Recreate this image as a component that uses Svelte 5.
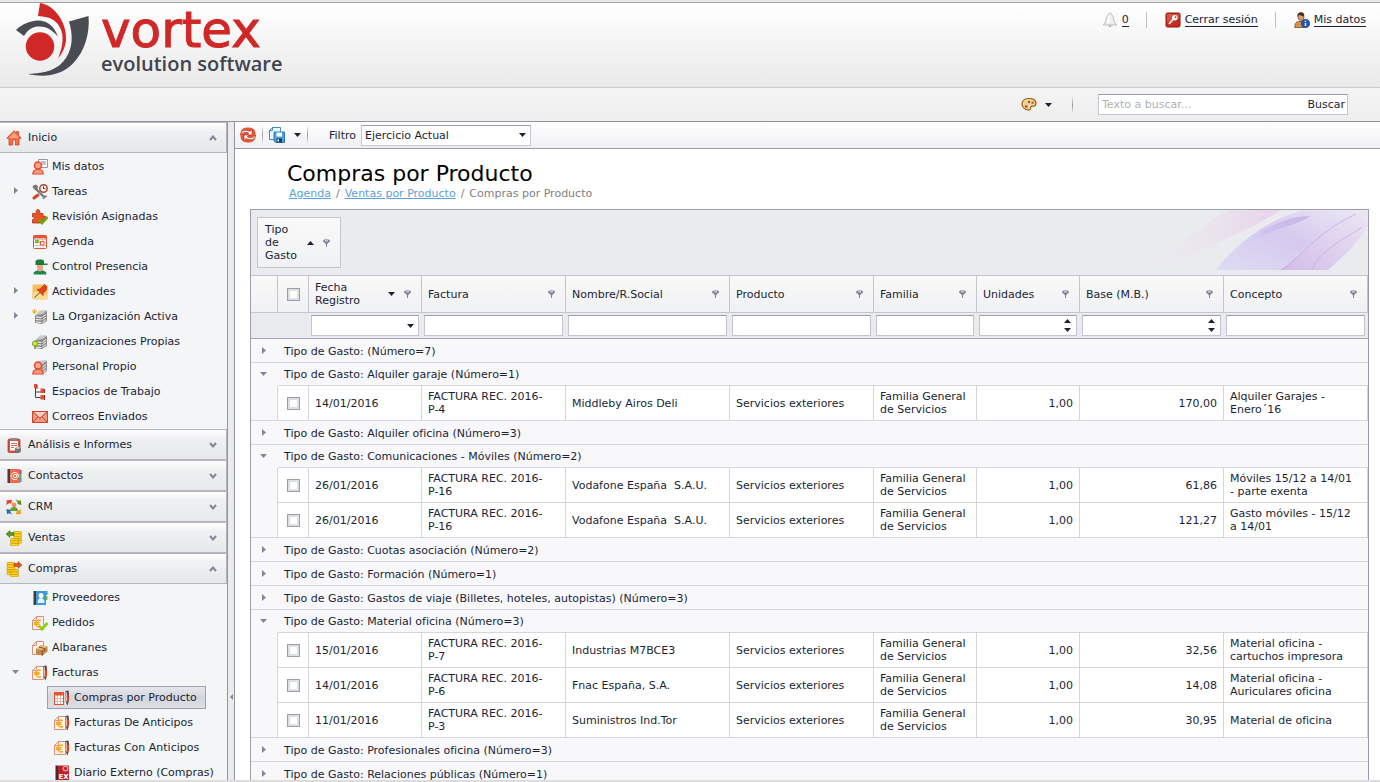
<script lang="ts">
  type Entry = { label: string; icon: string; arrow?: 'right' | 'down'; selected?: boolean; children?: Entry[] };
  type Section = { label: string; icon: string; open: boolean; items: Entry[] };

  const building =
    '<path d="M3 7l5-4 7-1v10l-5 3-7-1z" fill="#8d8d8d"/><path d="M3 6l5-4.500 7-.5-4 4z" fill="#c9c9c9"/><path d="M4 8l6 .5 4-3M4 10.500l6 .5 4-3M4 13l6 .7 4-3" stroke="#f6f6f6" fill="none"/><path d="M10 6.500V15" stroke="#707070" stroke-width=".7"/>';
  const person =
    '<circle cx="6" cy="6.500" r="3.500" fill="#f9a48f" stroke="#e8482c" stroke-width="1.500"/><path d="M.8 15c0-3 2-4.500 5.200-4.500s5.200 1.500 5.200 4.500z" fill="#f99a82" stroke="#e8482c" stroke-width="1.200"/>';
  const sheet =
    '<path d="M4.500 1.500h7v13h-11v-9z" fill="#fff6ef" stroke="#dc8f76"/><path d="M4.500 1.500v4h-4" fill="none" stroke="#dc8f76"/>';
  const euro = '<path d="M9 5.500C6 4 4 6 4 8.500s2 4.500 5 3M2 7.700h5.500M2 9.400h5.500" fill="none" stroke="#fba61a" stroke-width="1.400"/>';
  const pen =
    '<path d="M11.500 4h3.500v7.500h-3.500z" fill="#e2401d"/><path d="M11.500 1l3-.5.5 4h-3.500z" fill="#4a4346"/><path d="M12.300 2v9" stroke="#fff" stroke-width=".8"/><path d="M11.800 11.500h3l-1.500 4.200z" fill="#5c4a48"/>';
  const coins = (x: number, y: number, n: number) =>
    Array.from(
      { length: n },
      (_, i) => `<rect x="${x}" y="${y + i * 2.4}" width="8" height="2.6" rx="1.2" fill="#ffd51e" stroke="#b98a00" stroke-width=".6"/>`
    ).join('');
  const book = '<path d="M1.500 1h2.500v14H1.500z" fill="#3d3d42"/>';

  const icons: Record<string, string> = {
    home: '<path d="M8 .8L.8 8.200H3V15h3.700v-5h2.800v5H13V8.200h2.200L12.600 5.600V1.500h-2v2z" fill="#f4704b" stroke="#c9401f" stroke-width=".8"/><path d="M8 2.500L3 8h10z" fill="#fca283"/>',
    card: '<path d="M6.500 .5h9v8h-9z" fill="#fff" stroke="#999"/><path d="M9 3h5M10 5h4" stroke="#888"/>' + person,
    tools:
      '<path d="M2 3l11 11" stroke="#6b6b6b" stroke-width="2"/><path d="M.500 2l1.500 3.500 3.500 0L6 2.500 4 .500z" fill="#777"/><path d="M2 14l4-3" stroke="#d8401d" stroke-width="3" stroke-linecap="round"/><path d="M6 11l3-3" stroke="#999" stroke-width="1.500"/><circle cx="11.500" cy="4.500" r="3.700" fill="#fff" stroke="#b5422a" stroke-width="1.500"/><path d="M11.500 2.300v2.400h2" stroke="#333" fill="none"/><path d="M11 15l1-3 3 .5" stroke="#888" fill="none" stroke-width="1.500"/>',
    puzzle:
      '<path d="M.500 4.500h4c-1-2 0-4 1.500-4s2.500 2 1.500 4H11v3c2-1 3 0 3 1.500S13 11 11 10v4H.500v-3.500c2 1 2.500-3.500 0-2.500z" fill="#e65427" stroke="#b43310" stroke-width=".8"/><path d="M7 10.500l3 3.500L15.500 8" fill="none" stroke="#6aa812" stroke-width="2.600"/>',
    calendar:
      '<rect x="1.500" y="1.500" width="13" height="13" rx="1" fill="#fff" stroke="#d9532f"/><path d="M2 5.500h12M2 8.500h12M2 11.500h12M5 5v9M8 5v9M11 5v9" stroke="#d0c8c4"/><path d="M1.500 1.500h13v3h-13z" fill="#e8552e"/><path d="M3 6h4v3H3z" fill="#7dba2e"/><path d="M8.500 7.500h3.500v3.500H8.500z" fill="#fff" stroke="#ea4c28"/>',
    guard:
      '<path d="M3.500 5V2.500C3.500 1 5 .5 8 .5s4 .5 4 2V4.500h3.500V6H3.500z" fill="#1c7a3a"/><path d="M5 6h6v3c0 2-1 3.500-3 3.500S5 11 5 9z" fill="#f3a184"/><path d="M1.500 15.500c0-3 2-4 4.500-4l2 1 2-1c2.500 0 4.500 1 4.500 4z" fill="#22864a"/>',
    pin: '<rect x=".5" y=".5" width="15" height="15" rx="1.500" fill="#fbc05c"/><path d="M.5 9l7-3 8 5v3.500l-1.500 1H2l-1.500-1z" fill="#fbd98e"/><path d="M2.500 13.500L8 8.500" stroke="#555"/><path d="M5 5.500l6 6 .5-3L14 6.500 15 3 12.500.5 10 3 8 5z" fill="#e4441b" stroke="#a82c0c" stroke-width=".6"/>',
    orgStar: building + '<path d="M2.500 0v5M0 2h5M1 4l1.500-2L4 4" stroke="#f7a823" fill="none"/>',
    orgPin: building + '<path d="M3 10v5" stroke="#c9762c" stroke-width="1.500"/><circle cx="3" cy="9.500" r="2.600" fill="#c6ea3c" stroke="#6f9c10"/>',
    orgPerson: building + person,
    tree: '<path d="M3.500 3v10.500H10M3.500 8H10" fill="none" stroke="#444"/><path d="M2 0h3v4H2zM8.500 4.500H12V9H8.500zM8.500 11H12v4.500H8.500z" fill="#e84f30"/><path d="M5 1v4M12.500 5v4M12.500 11v5" stroke="#962712"/>',
    mail: '<path d="M.5 2.500h15v11H.5z" fill="#f49a84" stroke="#cf4328"/><path d="M2 3h12L8 8.500z" fill="#fcd0c3"/><path d="M.5 2.500L8 9.500l7.500-7M.5 13.500L6 8M15.500 13.500L10 8" fill="none" stroke="#c0412a"/>',
    clipboard:
      '<rect x="2" y="2" width="12" height="13.500" rx="1.500" fill="#d9503a" stroke="#9c3222" stroke-width=".7"/><path d="M4 4h8v9.500H4z" fill="#fff"/><path d="M5 1h6v2.500H5z" fill="#8d8d8d"/><path d="M5 6.500h6M5 8.500h6M5 10.500h3" stroke="#db6b58"/><path d="M9 11l3-1.500 3 1.500v3.500l-3 1.500-3-1.500z" fill="#777"/><path d="M9 11l3-1.500 3 1.500-3 1z" fill="#c9c9c9"/>',
    contacts:
      '<path d="M14 2h1.500v4H14z" fill="#9b45b5"/><path d="M14 6h1.500v4H14z" fill="#7db528"/><path d="M14 10h1.500v4H14z" fill="#2d9be0"/><path d="M4 1h10v14H4z" fill="#f2684a"/>' +
      book +
      '<circle cx="9" cy="8" r="1.700" fill="none" stroke="#fff"/><path d="M10.700 6.500v2.700c1.500.8 2-1 1.700-2A3.700 3.700 0 1 0 11 11" fill="none" stroke="#fff"/>',
    crm: '<circle cx="8" cy="6" r="2.400" fill="#ed9655"/><path d="M4 12c0-3 2-4 4-4s4 1 4 4z" fill="#63a02c"/><path d="M0 6l1-3L0 1.500 6 .8 5 5 3.800 4z" fill="#e0412a"/><path d="M9.500 .5l3.500 1.500 1.500-1.200L15.500 6 11 5l1-1z" fill="#5e8c20"/><path d="M15.500 10l-1 3 1 2-5.500 .3 1-4.300 1.300 1z" fill="#f29a1e"/><path d="M6 15.500l-3-1.200-2 1L.500 10l4.500 1-1 1z" fill="#2c6fb5"/>',
    sales: coins(7.5, 1.5, 5) + coins(4.5, 8.5, 3) + '<path d="M0 4L4 .500v2h4v3H4v2z" fill="#5a9b20" stroke="#3b7010" stroke-width=".5"/>',
    buys: coins(1, 1.5, 5) + coins(4.5, 8.5, 3) + '<path d="M16 4L12 .5v2H8v3h4v2z" fill="#dc571b" stroke="#a53908" stroke-width=".5"/>',
    suppliers:
      '<path d="M14 1h1.500v4H14z" fill="#2c9be8"/><path d="M14 6h1.500v4H14z" fill="#6fc02c"/><path d="M4 1h10v14H4z" fill="#3f97dc"/>' +
      book +
      '<circle cx="9" cy="5.500" r="2.500" fill="#fff"/><path d="M5.500 13c0-3.500 1.500-5 3.500-5s3.500 1.500 3.500 5z" fill="#e6f3fd"/>',
    order: sheet + euro + '<path d="M7 10.500l3 3.500L15.500 8" fill="none" stroke="#8fce13" stroke-width="2.600"/>',
    delivery:
      sheet +
      '<path d="M4 9l5-4 6.500 1.500v5L10 15.500 4 14z" fill="#c68743"/><path d="M4 9l5-4 6.500 1.500L10.500 10z" fill="#e9bd83"/><path d="M10.300 10v5.500M7 7l5.500 1.600v2.500" stroke="#7e4c1c" fill="none"/>',
    invoice: sheet + euro + pen,
    product:
      '<rect x=".5" y="2.500" width="9" height="12" fill="#fff" stroke="#e2512c"/><path d="M1 8.500h8M1 11.500h8M3.500 5v9M6.500 5v9" stroke="#e9b4a4"/><path d="M0 2h10v3.500H0z" fill="#e8552e"/>' + pen,
    diary:
      '<path d="M4 .5h11v15H4z" fill="#c0202a"/><path d="M1.500 .5H4v15H1.500z" fill="#333"/><circle cx="11.500" cy="3.500" r="2.300" fill="none" stroke="#f1a5a5" stroke-width="1.300"/><text x="4.500" y="13.500" font-family="DejaVu Sans" font-size="7" font-weight="bold" fill="#fff">EX</text>',
    bell: '<path d="M8 1c1 0 1.500.5 1.500 1.500C12 4 11.500 8 12.500 10l2 3h-13l2-3c1-2 .5-6 3-7.500C6.500 1.500 7 1 8 1z" fill="#eee" stroke="#bdbdbd"/><path d="M6 13.500h4l-2 2z" fill="#aaa"/><path d="M7 4L6 11" stroke="#fff" stroke-width="1.500"/>',
    key: '<rect x="1" y="1" width="14" height="14" rx="1.500" fill="#c52f20" stroke="#8d180f"/><path d="M2 2h12v5L2 10z" fill="#d8533f"/><circle cx="9.800" cy="5.800" r="2.700" fill="#fff"/><circle cx="10.500" cy="5.200" r=".9" fill="#c52f20"/><path d="M8 7.500L4 12" stroke="#fff" stroke-width="1.700"/>',
    user: '<path d="M.8 15.500c0-5 1.500-6 5.200-6s5 1 5 6z" fill="#d7904c" stroke="#6f4014" stroke-width=".7"/><ellipse cx="7" cy="4.800" rx="3" ry="3.800" fill="#dda069" stroke="#54310f" stroke-width=".6"/><path d="M3.500 5C3 1.500 5 .3 7 .3S10.800 1.500 10 4.500C8 4 6 2.500 5 3z" fill="#493019"/><circle cx="11.500" cy="11.500" r="4.200" fill="#2152b5" stroke="#163678" stroke-width=".6"/><path d="M11.500 11v3M11.500 8.700v1.300" stroke="#fff" stroke-width="1.400"/>',
    palette:
      '<path d="M8 1.500c4 0 7 1.700 7 4.800 0 2.400-1.500 3.200-3.500 2.900-1.700-.2-2 .7-1.800 1.600.3 1.700-1 2.400-2.700 2.200C3.500 12.500 1 10 1 7c0-3.500 3-5.500 7-5.500z" fill="#f7cf86" stroke="#8b5510" stroke-width="1.100"/><path d="M7 4h2v2H7z" fill="#3a62c4"/><path d="M4 8.500h2.500v2H4z" fill="#c92c1d"/><path d="M10.500 4.500h2.300v2.300h-2.300z" fill="#d5642c"/><path d="M7.500 8h1.700v2H7.500z" fill="#fff"/>',
    refresh:
      '<rect x=".5" y=".5" width="15" height="15" rx="6" fill="#e4573a"/><path d="M.5 8C1 3 5 2 10 4.500l2-2V8H7l1.800-1.700C6 4.500 3 5 .5 8z" fill="#fff" stroke="#b93219" stroke-width=".7"/><path d="M15.500 8c-.5 5-4.500 6-9.500 3.500l-2 2V8h5l-1.800 1.700C10 11.500 13 11 15.500 8z" fill="#fff" stroke="#b93219" stroke-width=".7"/>',
    save: '<path d="M3.500.5h8v12h-11v-9z" fill="#eef7fd" stroke="#3b8fc9"/><path d="M3.500.5v3h-3" fill="none" stroke="#3b8fc9"/><path d="M5 5h10.500v10.500H6.500L5 14z" fill="#4da1de" stroke="#2e76b3"/><path d="M7.500 5.500h5.500v4H7.500z" fill="#fff"/><path d="M7.500 11.500h5.500v4H7.500z" fill="#1e3c5c"/><path d="M8.500 12.500h1.500v2H8.500z" fill="#fff"/>'
  };

  const menu: Section[] = [
    {
      label: 'Inicio',
      icon: 'home',
      open: true,
      items: [
        { label: 'Mis datos', icon: 'card' },
        { label: 'Tareas', icon: 'tools', arrow: 'right' },
        { label: 'Revisión Asignadas', icon: 'puzzle' },
        { label: 'Agenda', icon: 'calendar' },
        { label: 'Control Presencia', icon: 'guard' },
        { label: 'Actividades', icon: 'pin', arrow: 'right' },
        { label: 'La Organización Activa', icon: 'orgStar', arrow: 'right' },
        { label: 'Organizaciones Propias', icon: 'orgPin' },
        { label: 'Personal Propio', icon: 'orgPerson' },
        { label: 'Espacios de Trabajo', icon: 'tree' },
        { label: 'Correos Enviados', icon: 'mail' }
      ]
    },
    { label: 'Análisis e Informes', icon: 'clipboard', open: false, items: [] },
    { label: 'Contactos', icon: 'contacts', open: false, items: [] },
    { label: 'CRM', icon: 'crm', open: false, items: [] },
    { label: 'Ventas', icon: 'sales', open: false, items: [] },
    {
      label: 'Compras',
      icon: 'buys',
      open: true,
      items: [
        { label: 'Proveedores', icon: 'suppliers' },
        { label: 'Pedidos', icon: 'order' },
        { label: 'Albaranes', icon: 'delivery' },
        {
          label: 'Facturas',
          icon: 'invoice',
          arrow: 'down',
          children: [
            { label: 'Compras por Producto', icon: 'product', selected: true },
            { label: 'Facturas De Anticipos', icon: 'invoice' },
            { label: 'Facturas Con Anticipos', icon: 'invoice' },
            { label: 'Diario Externo (Compras)', icon: 'diary' }
          ]
        }
      ]
    }
  ];

  const columns = [
    { label: 'Fecha Registro', width: 113, filter: 'date', sorted: true },
    { label: 'Factura', width: 144, filter: 'text' },
    { label: 'Nombre/R.Social', width: 164, filter: 'text' },
    { label: 'Producto', width: 144, filter: 'text' },
    { label: 'Familia', width: 103, filter: 'text' },
    { label: 'Unidades', width: 103, filter: 'spin' },
    { label: 'Base (M.B.)', width: 144, filter: 'spin' },
    { label: 'Concepto', width: 144, filter: 'text' }
  ];

  // fecha, factura, nombre, base, concepto
  const groups: { title: string; rows?: string[][] }[] = [
    { title: '(Número=7)' },
    {
      title: 'Alquiler garaje (Número=1)',
      rows: [['14/01/2016', 'P-4', 'Middleby Airos Deli', '170,00', 'Alquiler Garajes - Enero´16']]
    },
    { title: 'Alquiler oficina (Número=3)' },
    {
      title: 'Comunicaciones - Móviles (Número=2)',
      rows: [
        ['26/01/2016', 'P-16', 'Vodafone España \u00a0S.A.U.', '61,86', 'Móviles 15/12 a 14/01 - parte exenta'],
        ['26/01/2016', 'P-16', 'Vodafone España \u00a0S.A.U.', '121,27', 'Gasto móviles - 15/12 a 14/01']
      ]
    },
    { title: 'Cuotas asociación (Número=2)' },
    { title: 'Formación (Número=1)' },
    { title: 'Gastos de viaje (Billetes, hoteles, autopistas) (Número=3)' },
    {
      title: 'Material oficina (Número=3)',
      rows: [
        ['15/01/2016', 'P-7', 'Industrias M7BCE3', '32,56', 'Material oficina - cartuchos impresora'],
        ['14/01/2016', 'P-6', 'Fnac España, S.A.', '14,08', 'Material oficina - Auriculares oficina'],
        ['11/01/2016', 'P-3', 'Suministros Ind.Tor', '30,95', 'Material de oficina']
      ]
    },
    { title: 'Profesionales oficina (Número=3)' },
    { title: 'Relaciones públicas (Número=1)' }
  ];
</script>

{#snippet icon(name: string)}
  <svg class="icon" width="16" height="16" viewBox="0 0 16 16" aria-hidden="true">{@html icons[name]}</svg>
{/snippet}

{#snippet caret(dir: string)}
  <svg class="caret" width="7" height="4" viewBox="0 0 7 4" aria-hidden="true">
    <path d={dir === 'up' ? 'M0 4L3.500 0 7 4z' : 'M0 0L3.500 4 7 0z'} fill="#201f35" />
  </svg>
{/snippet}

{#snippet expander(dir: string)}
  <svg class="expander" width="7" height="7" viewBox="0 0 7 7" aria-hidden="true">
    <path d={dir === 'down' ? 'M0 2h7L3.500 6z' : 'M2 0l4 3.500L2 7z'} fill="#85859a" />
  </svg>
{/snippet}

{#snippet pinFilter(label: string)}
  <button class="plain" aria-label="Filtrar {label}">
    <svg width="7" height="8" viewBox="0 0 7 8">
      <ellipse cx="3.500" cy="2" rx="3.500" ry="1.700" fill="#85859a" />
      <path d="M1 3h5L4 5.500V8H3V5.500z" fill="#85859a" />
      <path d="M2 1.800h3" stroke="#e4e4ea" />
    </svg>
  </button>
{/snippet}

{#snippet entry(item: Entry)}
  <li>
    <div class="entry">
      <span class="toggle">{#if item.arrow}{@render expander(item.arrow)}{/if}</span>
      <a href="#menu" class:selected={item.selected}>{@render icon(item.icon)}{item.label}</a>
    </div>
    {#if item.children}
      <ul class="children">
        {#each item.children as child}{@render entry(child)}{/each}
      </ul>
    {/if}
  </li>
{/snippet}

<div class="page">
  <header class="banner">
    <div class="logo">
      <svg width="76" height="76" viewBox="0 0 76 76" aria-hidden="true">
        <path d="M0 27C6 21 15 17.500 22 17.500 31 17.500 38 23 42 33.500 35 25.500 29 23 22 23.500 15 24 11 28 8 33z" fill="#4a4c54" />
        <path d="M24 0C38 2 51 19 50 37 49.500 44 46 51 42 55.500 46 46 48 36 45.500 28 42 18 35 13.500 22 13z" fill="#d02727" />
        <path d="M53 18.500L72.500 13C74 30 69 48 57 60.500 45 73 28 74.500 12 71 30 70 42 67 50 55 57 44 57 32 53 18.500z" fill="#4a4c54" />
        <circle cx="24" cy="43.500" r="14.200" fill="#d02727" />
      </svg>
      <div class="wordmark">
        <span class="brand">vortex</span>
        <span class="tagline">evolution software</span>
      </div>
    </div>
    <nav class="account">
      <a href="#avisos">{@render icon('bell')}<span>0</span></a>
      <a href="#salir">{@render icon('key')}<span>Cerrar sesión</span></a>
      <a href="#datos">{@render icon('user')}<span>Mis datos</span></a>
    </nav>
  </header>

  <div class="searchbar">
    <button class="plain theme" aria-label="Tema">{@render icon('palette')}{@render caret('down')}</button>
    <i class="sep"></i>
    <form class="search box">
      <input type="text" placeholder="Texto a buscar..." aria-label="Texto a buscar" />
      <button type="button" class="plain">Buscar</button>
    </form>
  </div>

  <div class="body">
    <aside>
      {#each menu as section}
        <button class="section">
          {@render icon(section.icon)}
          <span>{section.label}</span>
          <svg width="8" height="6" viewBox="0 0 8 6" aria-hidden="true">
            <path d={section.open ? 'M1 5L4 1.500 7 5' : 'M1 1L4 4.500 7 1'} fill="none" stroke="#85859a" stroke-width="2" />
          </svg>
        </button>
        {#if section.open}
          <ul class="entries">
            {#each section.items as item}{@render entry(item)}{/each}
          </ul>
        {/if}
      {/each}
    </aside>

    <div class="splitter">
      <svg width="3" height="6" viewBox="0 0 3 6" aria-hidden="true"><path d="M3 0v6L0 3z" fill="#85859a" /></svg>
    </div>

    <main>
      <div class="toolbar">
        <button class="plain" aria-label="Actualizar">{@render icon('refresh')}</button>
        <i class="sep"></i>
        <button class="plain save" aria-label="Exportar">{@render icon('save')}{@render caret('down')}</button>
        <i class="sep"></i>
        <label for="filtro">Filtro</label>
        <div class="box picker">
          <select id="filtro"><option>Ejercicio Actual</option></select>
          {@render caret('down')}
        </div>
      </div>

      <h1>Compras por Producto</h1>
      <nav class="crumbs">
        <a href="#agenda">Agenda</a><span>/</span><a href="#ventas">Ventas por Producto</a><span>/</span>Compras por Producto
      </nav>

      <div class="grid">
        <div class="group-panel">
          <div class="chip head">
            <span>Tipo de Gasto</span>
            {@render caret('up')}
            {@render pinFilter('Tipo de Gasto')}
          </div>
          <svg width="218" height="60" viewBox="0 0 218 60" aria-hidden="true">
            <defs>
              <linearGradient id="pink" x1="0" x2="1">
                <stop offset="0" stop-color="#ebebef" />
                <stop offset=".5" stop-color="#ebe0ec" />
                <stop offset="1" stop-color="#e6c9ea" />
              </linearGradient>
              <linearGradient id="violet" x1="0" y1="1" x2="1" y2="0">
                <stop offset="0" stop-color="#dddcf3" />
                <stop offset=".5" stop-color="#d6c9ee" />
                <stop offset="1" stop-color="#ece9f5" />
              </linearGradient>
              <linearGradient id="tip" x1="0" y1="1" x2="1" y2="0">
                <stop offset="0" stop-color="#d2bce8" />
                <stop offset="1" stop-color="#ece6f4" />
              </linearGradient>
              <linearGradient id="fold" x1="0" y1="1" x2="1" y2="0">
                <stop offset="0" stop-color="#d3c8ee" />
                <stop offset="1" stop-color="#bda6e4" />
              </linearGradient>
            </defs>
            <path d="M0 60C20 45 50 15 80 0h51C100 20 50 42 0 60z" fill="url(#pink)" opacity=".7" />
            <path d="M66 60C85 34 120 8 154 0h64v8C190 28 165 50 130 60z" fill="url(#violet)" />
            <path d="M130 60C150 48 170 15 218 1v14c-10 20-26 32-40 45z" fill="url(#tip)" />
            <path d="M100 32C118 15 140 6 160 6 148 16 125 17 100 32z" fill="url(#fold)" opacity=".7" />
            <path d="M131 60C154 46 165 23 206 4M162 60C170 40 190 32 212 17" fill="none" stroke="#c4aee3" opacity=".8" />
          </svg>
        </div>

        <table>
          <colgroup>
            <col style:width="27px" />
            <col style:width="31px" />
            {#each columns as col}<col style:width="{col.width}px" />{/each}
          </colgroup>
          <thead>
            <tr class="titles">
              <th></th>
              <th class="check"><input type="checkbox" aria-label="Seleccionar todo" /></th>
              {#each columns as col}
                <th>
                  <div class="head">
                    <span>{col.label}</span>
                    {#if col.sorted}{@render caret('down')}{/if}
                    {@render pinFilter(col.label)}
                  </div>
                </th>
              {/each}
            </tr>
            <tr class="filters">
              <td></td>
              <td></td>
              {#each columns as col}
                <td>
                  <div class="box">
                    <input type="text" aria-label={col.label} />
                    {#if col.filter === 'date'}
                      <button class="plain" aria-label="Abrir calendario">{@render caret('down')}</button>
                    {:else if col.filter === 'spin'}
                      <button class="plain spin" aria-label="Cambiar valor">{@render caret('up')}{@render caret('down')}</button>
                    {/if}
                  </div>
                </td>
              {/each}
            </tr>
          </thead>
          <tbody>
            {#each groups as group}
              <tr class="group" class:open={group.rows}>
                <td><button class="plain" aria-label="Desplegar">{@render expander(group.rows ? 'down' : 'right')}</button></td>
                <td colspan="9">Tipo de Gasto: {group.title}</td>
              </tr>
              {#each group.rows ?? [] as [date, invoice, name, base, concept], i}
                <tr class="data" class:last={i === group.rows!.length - 1}>
                  <td class="indent"></td>
                  <td class="check"><input type="checkbox" aria-label="Seleccionar {invoice}" /></td>
                  <td>{date}</td>
                  <td class="long">FACTURA REC. 2016-{invoice}</td>
                  <td>{name}</td>
                  <td>Servicios exteriores</td>
                  <td>Familia General de Servicios</td>
                  <td class="num">1,00</td>
                  <td class="num">{base}</td>
                  <td class="long">{concept}</td>
                </tr>
              {/each}
            {/each}
          </tbody>
        </table>
      </div>
    </main>
  </div>
</div>

<style>
  :global(body) {
    margin: 0;
  }

  .page {
    box-sizing: border-box;
    display: flex;
    flex-direction: column;
    height: 100vh;
    overflow: hidden;
    border-top: 2px solid #e8e8e8;
    border-bottom: 2px solid #dcdcdc;
    background: #fff;
    color: #201f35;
    font: 11px/13px 'DejaVu Sans', Verdana, sans-serif;
    font-variant-ligatures: none;
  }

  .page * {
    box-sizing: border-box;
  }

  input,
  select,
  button {
    font: inherit;
    color: inherit;
  }

  ul {
    list-style: none;
    margin: 0;
    padding: 0;
  }

  svg {
    display: block;
    flex: none;
  }

  .plain {
    display: flex;
    align-items: center;
    padding: 0;
    border: 0;
    background: none;
  }

  .sep {
    width: 1px;
    height: 16px;
    background: linear-gradient(#e4e4e8, #9a9aa8, #e4e4e8);
  }

  .box {
    display: flex;
    align-items: center;
    height: 21px;
    border: 1px solid #c4c5d0;
    border-top-color: #9c9cab;
    background: #fff;
  }

  .box input {
    flex: 1;
    min-width: 0;
    height: 100%;
    padding: 0 3px;
    border: 0;
    outline: 0;
    background: none;
  }

  .banner {
    display: flex;
    flex: none;
    justify-content: space-between;
    height: 86px;
    border-top: 1px solid #a0a0a4;
    border-bottom: 1px solid #cacaca;
    background: linear-gradient(#fff, #e9e9e9);
  }

  .logo {
    display: flex;
    gap: 9px;
    padding-left: 16px;
  }

  .wordmark {
    display: flex;
    flex-direction: column;
    padding-top: 3px;
  }

  .brand {
    color: #d02727;
    font-size: 50px;
    line-height: 48px;
    -webkit-text-stroke: 1px #d02727;
  }

  .tagline {
    color: #42444e;
    font: 600 20px/20px 'Open Sans', sans-serif;
  }

  .account {
    display: flex;
    align-items: flex-start;
    padding: 9px 14px 0 0;
  }

  .account a {
    display: flex;
    align-items: center;
    gap: 4px;
    color: inherit;
    text-decoration: none;
  }

  .account a + a {
    margin-left: 17px;
    padding-left: 18px;
    border-left: 1px solid #c0c0c8;
  }

  .account span {
    border-bottom: 1px solid #201f35;
    line-height: 12px;
  }

  .searchbar {
    display: flex;
    flex: none;
    align-items: center;
    justify-content: flex-end;
    height: 34px;
    padding-right: 32px;
    border-bottom: 1px solid #94949c;
    background: linear-gradient(#f4f4f4, #eeeeee);
  }

  .theme {
    gap: 8px;
    margin-right: 20px;
  }

  .search {
    width: 250px;
    margin-left: 25px;
  }

  .search .plain {
    padding-right: 2px;
  }

  .search input::placeholder {
    color: #b0b0b4;
  }

  .body {
    display: flex;
    flex: 1;
    min-height: 0;
  }

  aside {
    flex: none;
    width: 227px;
    overflow: hidden;
    background: #f3f5f7;
  }

  .section {
    display: flex;
    align-items: center;
    gap: 6px;
    width: 100%;
    height: 31px;
    padding: 0 9px 0 6px;
    border: 1px solid #b5b6c0;
    border-left: 0;
    background: linear-gradient(#fff, #eff0f2 30%, #e7e8ea);
    text-align: left;
  }

  .section span {
    flex: 1;
  }

  .entries {
    padding-top: 1px;
  }

  .entry {
    display: flex;
    align-items: center;
    height: 25px;
  }

  .toggle {
    flex: none;
    width: 25px;
    padding: 0 0 3px 12px;
  }

  .children .toggle {
    width: 47px;
  }

  .entry a {
    display: flex;
    align-items: center;
    gap: 4px;
    height: 23px;
    padding: 0 8px 0 6px;
    border: 1px solid transparent;
    color: inherit;
    text-decoration: none;
    white-space: nowrap;
  }

  .entry a.selected {
    border-color: #9d9eae;
    background: linear-gradient(#e6e7eb, #d5d6dd 50%, #dddee4);
  }

  .splitter {
    display: flex;
    flex: none;
    align-items: flex-end;
    justify-content: center;
    width: 8px;
    padding-bottom: 80px;
    border: 1px solid #94949f;
    border-width: 0 1px;
    background: #eaebef;
  }

  main {
    flex: 1;
    min-width: 0;
    overflow: hidden;
  }

  .toolbar {
    display: flex;
    align-items: center;
    height: 27px;
    padding-left: 5px;
    border-bottom: 1px solid #9a9aa6;
    background: linear-gradient(#fff, #f0f0f3);
  }

  .toolbar .sep {
    margin: 0 6px;
  }

  .save {
    gap: 9px;
  }

  .toolbar label {
    margin: 0 5px 0 15px;
  }

  .picker {
    width: 170px;
    padding-right: 4px;
  }

  .picker select {
    flex: 1;
    padding: 0 3px;
    border: 0;
    outline: 0;
    appearance: none;
    background: none;
  }

  h1 {
    margin: 0;
    padding: 12px 0 0 52px;
    color: #000;
    font-size: 22px;
    font-weight: normal;
    line-height: 26px;
  }

  .crumbs {
    padding: 0 0 9px 54px;
    color: #808080;
  }

  .crumbs a {
    color: #5c9fdc;
  }

  .crumbs span {
    padding: 0 5px;
  }

  .grid {
    margin: 0 11px 0 15px;
    border: 1px solid #9c9cac;
    background: #fff;
  }

  .group-panel {
    display: flex;
    justify-content: space-between;
    height: 65px;
    padding-left: 6px;
    background: #eaebef;
  }

  .head {
    display: flex;
    align-items: center;
    gap: 9px;
  }

  .head span {
    flex: 1;
    min-width: 0;
  }

  .chip {
    width: 84px;
    height: 51px;
    margin-top: 7px;
    padding: 0 10px 0 7px;
    border: 1px solid #c5c6ce;
    background: linear-gradient(#f9f9f9, #f0f1f3);
  }

  table {
    width: 100%;
    table-layout: fixed;
    border-spacing: 0;
  }

  th,
  td {
    padding: 4px 6px;
    border: 0 solid #d5d6dc;
    font-weight: normal;
    text-align: left;
  }

  .titles th {
    height: 38px;
    padding: 0 10px 0 6px;
    border: 1px solid #c5c6ce;
    border-left: 0;
    background: linear-gradient(#f9f9f9, #f0f1f3);
  }

  .filters td {
    padding: 2px 3px 2px 2px;
    border-bottom: 1px solid #a3a4b3;
    background: #eaebef;
  }

  .filters .plain {
    padding-right: 4px;
  }

  .filters .spin {
    flex-direction: column;
    gap: 5px;
    padding-right: 5px;
  }

  input[type='checkbox'] {
    display: block;
    width: 13px;
    height: 13px;
    margin: 0 auto;
    border: 1px solid #9c9cac;
    appearance: none;
    background: #fff;
    box-shadow: inset 0 0 0 2px #dcdfe6;
  }

  .group td {
    height: 24px;
    padding: 6px 6px 4px;
    border-bottom-width: 1px;
    background: #f8f8fb;
  }

  .group .plain {
    padding: 0 0 3px 3px;
  }

  .group.open td {
    height: 23px;
    padding: 5px 6px 4px;
  }

  .group.open td:first-child {
    border-bottom: 0;
  }

  .data td {
    height: 35px;
    border-width: 0 1px 1px 0;
  }

  .data .indent {
    border-bottom-width: 0;
    background: #f8f8fb;
  }

  .data.last .indent {
    border-bottom-width: 1px;
  }

  .data .long {
    padding-right: 15px;
  }

  .data .num {
    text-align: right;
  }

  .data .check,
  .titles .check {
    padding: 0;
  }
</style>
